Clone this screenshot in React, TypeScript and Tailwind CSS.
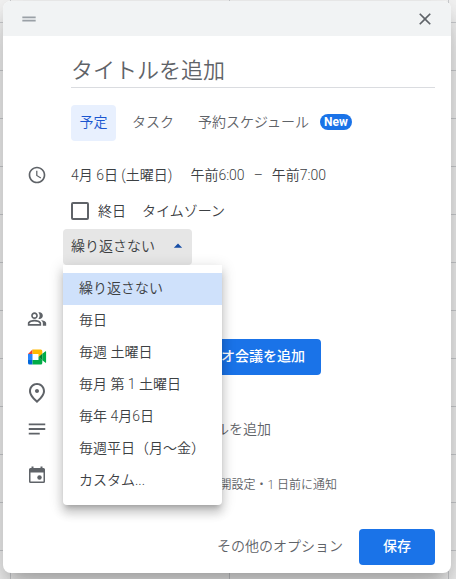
import { useState } from "react";
import type { ReactNode } from "react";
import {
  MdArrowDropUp,
  MdClose,
  MdDragHandle,
  MdNotes,
  MdOutlinePeopleAlt,
  MdOutlinePlace,
  MdSchedule,
} from "react-icons/md";

const repeatOptions = [
  "繰り返さない",
  "毎日",
  "毎週 土曜日",
  "毎月 第 1 土曜日",
  "毎年 4月6日",
  "毎週平日（月～金）",
  "カスタム...",
];

function MeetIcon() {
  return (
    <svg viewBox="0 0 20 16" className="h-4 w-5" aria-hidden="true">
      <path d="M1 5 5.500 .5V5z" fill="#ea4335" />
      <path d="M1 5h4.500v6H1z" fill="#2684fc" />
      <path d="M1 11h4.500v4.500h-3A1.500 1.500 0 0 1 1 14z" fill="#0066da" />
      <path d="M5.500 .5h8.300A1.500 1.500 0 0 1 15.300 2v3L11.500 8V5h-6z" fill="#ffba00" />
      <path d="M5.500 11h6V8l3.800 3V14a1.500 1.500 0 0 1-1.500 1.500H5.500z" fill="#00ac47" />
      <path d="M11.500 8 15.300 4.800V11.200z" fill="#00832d" />
      <path d="m15.300 4.800 2.900-2.400c.4-.4.9-.1.900.4v10.400c0 .5-.5.8-.9.400l-2.900-2.400z" fill="#00ac47" />
    </svg>
  );
}

function CalendarIcon() {
  return (
    <svg viewBox="0 0 20 20" className="size-5" fill="currentColor" aria-hidden="true">
      <path
        fillRule="evenodd"
        d="M4.500 1.500h2V3h7V1.500h2V3h1A1.500 1.500 0 0 1 18 4.500v12a1.500 1.500 0 0 1-1.500 1.500h-13A1.500 1.500 0 0 1 2 16.500v-12A1.500 1.500 0 0 1 3.500 3h1zM3.500 7.500v9h13v-9z"
      />
      <circle cx="12.500" cy="12.500" r="2.200" />
    </svg>
  );
}

type RowProps = {
  icon?: ReactNode;
  className?: string;
  children?: ReactNode;
};

function Row({ icon, className = "h-9", children }: RowProps) {
  return (
    <div className={`flex items-center ${className}`}>
      <span className="flex w-17 shrink-0 justify-center text-[#5f6368]">{icon}</span>
      {children}
    </div>
  );
}

export default function App() {
  const [open, setOpen] = useState(true);
  const [repeat, setRepeat] = useState(repeatOptions[0]);
  const [allDay, setAllDay] = useState(false);

  return (
    <div className="min-h-screen overflow-hidden bg-[#f8f8f8] bg-[linear-gradient(#cfd1d4_1px,transparent_1px),linear-gradient(90deg,#cfd1d4_1px,transparent_1px)] bg-[size:219px_48px] bg-[position:10px_22px] pt-px pr-[5px] pb-1.5 pl-[3px] font-[Roboto,'Noto_Sans_CJK_JP',sans-serif] text-sm font-[350] text-[#3c4043]">
      <div
        role="dialog"
        aria-label="予定の作成"
        className="rounded-lg bg-white shadow-[0_24px_38px_3px_rgba(0,0,0,0.14),0_9px_46px_8px_rgba(0,0,0,0.12),0_11px_15px_-7px_rgba(0,0,0,0.2)]"
      >
        <div className="flex h-[35px] items-center justify-between rounded-t-lg bg-[#f1f3f4] px-4 text-[#5f6368]">
          <MdDragHandle className="size-5 text-[#9aa0a6]" />
          <button type="button" aria-label="閉じる">
            <MdClose className="size-5" stroke="currentColor" />
          </button>
        </div>

        <div className="pt-4 pr-4 pl-17">
          <input
            type="text"
            aria-label="タイトルを追加"
            placeholder="タイトルを追加"
            className="h-9 w-full border-b border-[#dadce0] pt-0.5 text-[22px] outline-none placeholder:text-[#5f6368]"
          />
        </div>

        <div className="flex items-center pt-[17px] pl-17 text-[#5f6368]">
          <button type="button" className="h-9 w-[45px] rounded bg-[#e8f0fe] pb-0.5 text-[#1a56d0]">
            予定
          </button>
          <button type="button" className="ml-4 pb-0.5">
            タスク
          </button>
          <button type="button" className="ml-6 flex items-center gap-[11px] pb-0.5">
            予約スケジュール
            <span className="h-4 rounded-full bg-[#1a73e8] px-1 text-xs leading-4 font-bold text-white">
              New
            </span>
          </button>
        </div>

        <Row icon={<MdSchedule className="size-5" />} className="mt-4 h-9">
          <button type="button">4月 6日 (土曜日)</button>
          <button type="button" className="ml-[18px]">
            午前6:00
          </button>
          <span className="mx-[9px]">–</span>
          <button type="button">午前7:00</button>
        </Row>

        <Row>
          <label className="flex items-center gap-[9px]">
            <input
              type="checkbox"
              checked={allDay}
              onChange={(e) => setAllDay(e.target.checked)}
              className="size-[18px] appearance-none rounded-xs border-2 border-[#5f6368] checked:bg-[#1a73e8]"
            />
            終日
          </label>
          <button type="button" className="ml-4">
            タイムゾーン
          </button>
        </Row>

        <div className="relative ml-15 w-[159px]">
          <button
            type="button"
            aria-haspopup="listbox"
            aria-expanded={open}
            onClick={() => setOpen(!open)}
            className="flex h-9 w-[129px] items-center justify-between rounded bg-[#e6e6e6] pr-1 pb-0.5 pl-2"
          >
            {repeat}
            <MdArrowDropUp className="size-5 text-[#174ea6]" />
          </button>
          {open && (
            <div
              role="listbox"
              aria-label="繰り返し"
              className="absolute top-full left-0 z-10 w-full rounded-b bg-white py-2 shadow-[0_5px_5px_-3px_rgba(0,0,0,0.2),0_8px_10px_1px_rgba(0,0,0,0.14),0_3px_14px_2px_rgba(0,0,0,0.12)]"
            >
              {repeatOptions.map((option) => (
                <button
                  key={option}
                  type="button"
                  role="option"
                  aria-selected={option === repeat}
                  onClick={() => {
                    setRepeat(option);
                    setOpen(false);
                  }}
                  className={`block h-8 w-full px-4 pb-0.5 text-left whitespace-nowrap ${
                    option === repeat ? "bg-[#cfe1fb]" : ""
                  }`}
                >
                  {option}
                </button>
              ))}
            </div>
          )}
        </div>

        <Row icon={<MdOutlinePeopleAlt className="size-5" />} className="mt-9 h-9" />

        <Row icon={<MeetIcon />} className="mt-0.5 h-9">
          <button
            type="button"
            className="h-9 w-[250px] rounded bg-[#1a73e8] pr-4 pb-0.5 text-right font-medium whitespace-nowrap text-white"
          >
            Google Meet のビデオ会議を追加
          </button>
        </Row>

        <Row icon={<MdOutlinePlace className="size-6" />} />

        <Row icon={<MdNotes className="size-[22px]" />}>
          <button type="button" className="w-50 text-right text-[#5f6368]">
            説明または添付ファイルを追加
          </button>
        </Row>

        <Row icon={<CalendarIcon />} className="mt-2.5 h-9">
          <button
            type="button"
            className="mt-5 w-[266px] text-right text-xs whitespace-nowrap text-[#5f6368]"
          >
            予定あり・デフォルトの公開設定・1 日前に通知
          </button>
        </Row>

        <div className="flex items-center justify-end gap-4 pt-9 pr-4 pb-2">
          <button type="button" className="pb-0.5 text-[#5f6368]">
            その他のオプション
          </button>
          <button
            type="button"
            className="h-9 rounded bg-[#1a73e8] px-6 pb-0.5 font-medium text-white"
          >
            保存
          </button>
        </div>
      </div>
    </div>
  );
}
